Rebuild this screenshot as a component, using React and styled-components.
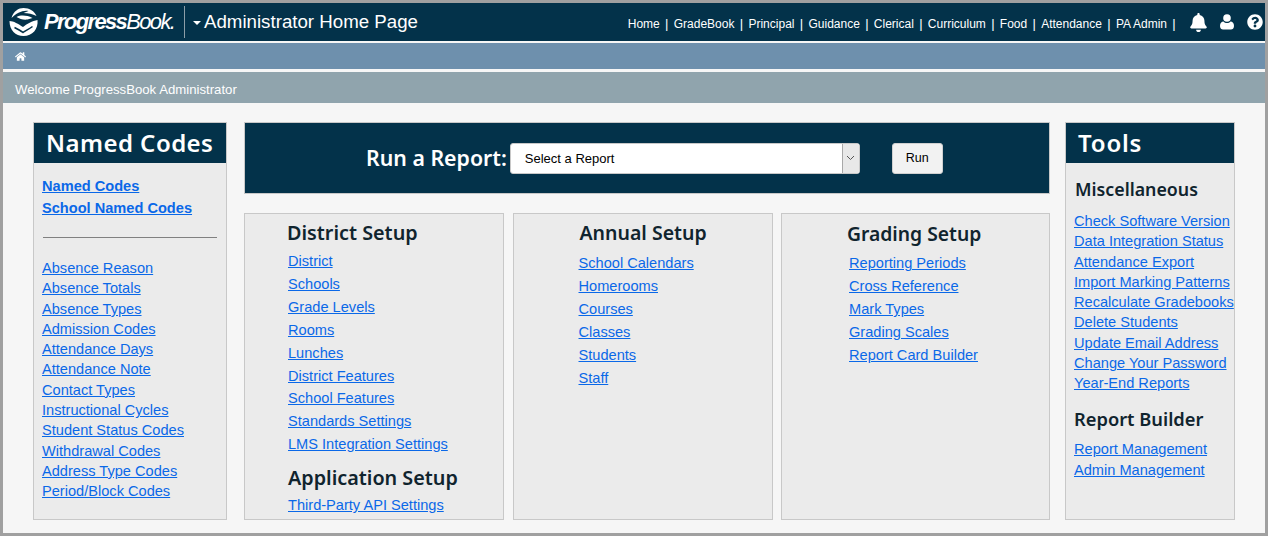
import React from "react";
import styled, { createGlobalStyle } from "styled-components";
import { FaBell, FaQuestionCircle, FaHome } from "react-icons/fa";

const GlobalStyle = createGlobalStyle`
  html, body {
    margin: 0;
    padding: 0;
    background: #f6f6f6;
  }
  body {
    font-family: "Liberation Sans", Arial, sans-serif;
  }
`;

const Frame = styled.div`
  box-sizing: border-box;
  width: 1268px;
  height: 536px;
  border: 3px solid #a0a0a0;
  background: #f6f6f6;
  overflow: hidden;
`;

const Header = styled.header`
  display: flex;
  align-items: center;
  height: 38px;
  background: #03324a;
  color: #fff;
`;

const Logo = styled.div`
  display: flex;
  flex: 0 0 auto;
  align-items: center;
  width: 182px;
  height: 32px;
  padding-left: 5px;
  box-sizing: border-box;
  border-right: 1px solid #8c9ea8;
  svg {
    flex: 0 0 auto;
  }
`;

const LogoText = styled.span`
  margin: -1px 0 0 5px;
  font-size: 22px;
  font-style: italic;
  letter-spacing: -1.65px;
  color: #fff;
  white-space: nowrap;
  b {
    font-weight: 700;
  }
`;

const PageTitle = styled.div`
  display: flex;
  align-items: center;
  margin-left: 8px;
  font-size: 18.7px;
  white-space: nowrap;
`;

const Caret = styled.span`
  width: 0;
  height: 0;
  margin-right: 3px;
  margin-top: 2px;
  border-left: 4px solid transparent;
  border-right: 4px solid transparent;
  border-top: 4px solid #fff;
`;

const TopNav = styled.nav`
  display: flex;
  align-items: center;
  margin-left: auto;
  padding-right: 2px;
  font-size: 12px;
`;

const NavLink = styled.a`
  margin-top: 2px;
  color: #fff;
  text-decoration: none;
  white-space: nowrap;
  &::after {
    content: "|";
    margin: 0 5.3px;
    font-size: 13px;
  }
`;

const IconRow = styled.div`
  display: flex;
  align-items: center;
  gap: 11.5px;
  margin-left: 8px;
  font-size: 16px;
  svg {
    display: block;
  }
`;

const BellIcon = styled(FaBell)`
  font-size: 19px;
`;

const CrumbBar = styled.div`
  display: flex;
  align-items: center;
  height: 26px;
  margin-top: 2px;
  padding-left: 12px;
  background: #6e90ad;
  color: #fff;
  font-size: 11px;
`;

const WelcomeBar = styled.div`
  display: flex;
  align-items: center;
  box-sizing: border-box;
  height: 31px;
  margin-top: 3px;
  padding: 4px 0 0 12px;
  background: #90a4ad;
  color: #fff;
  font-size: 13.2px;
`;

const Content = styled.main`
  display: flex;
  padding: 19px 30px 0;
  align-items: stretch;
  height: 398px;
`;

const SideBox = styled.aside`
  box-sizing: border-box;
  flex: 0 0 ${(p) => p.$width}px;
  height: 398px;
  background: #ebebeb;
  border: 1px solid #c8c8c8;
`;

const SideTitle = styled.h2`
  box-sizing: border-box;
  height: 40px;
  margin: 0;
  padding-left: 12px;
  background: #03324a;
  color: #fff;
  font-family: "Noto Sans", sans-serif;
  font-size: 24px;
  font-weight: 600;
  line-height: 40px;
  letter-spacing: ${(p) => p.$spacing}px;
`;

const Center = styled.div`
  flex: 0 0 806px;
  display: flex;
  flex-direction: column;
  gap: 19px;
  margin: 0 15px 0 17px;
`;

const Banner = styled.div`
  box-sizing: border-box;
  display: flex;
  align-items: center;
  height: 72px;
  padding-left: 121px;
  background: #03324a;
  border: 1px solid #c8c8c8;
`;

const BannerLabel = styled.label`
  margin-top: -2px;
  color: #fff;
  font-family: "Noto Sans", sans-serif;
  font-size: 21.3px;
  font-weight: 600;
  white-space: nowrap;
`;

const SelectBox = styled.div`
  box-sizing: border-box;
  display: flex;
  align-items: center;
  justify-content: space-between;
  width: 350px;
  height: 31px;
  margin-left: 3px;
  padding-left: 14px;
  background: #fff;
  border: 1px solid #c8c8c8;
  border-radius: 3px;
  font-size: 13px;
  color: #000;
`;

const SelectArrow = styled.span`
  box-sizing: border-box;
  display: flex;
  align-items: center;
  justify-content: center;
  width: 17px;
  height: 29px;
  background: #e8e8e8;
  border-left: 1px solid #a8a8a8;
`;

const RunButton = styled.button`
  box-sizing: border-box;
  width: 51px;
  height: 31px;
  margin-left: 32px;
  padding: 0;
  background: #f2f2f2;
  border: 1px solid #d0d0d0;
  border-radius: 3px;
  font-family: inherit;
  font-size: 12.5px;
  color: #000;
`;

const Panels = styled.div`
  display: grid;
  grid-template-columns: 260px 260px 269px;
  column-gap: 8.5px;
  height: 307px;
`;

const Panel = styled.section`
  box-sizing: border-box;
  padding: ${(p) => p.$top}px 0 0 ${(p) => p.$indent}px;
  background: #ebebeb;
  border: 1px solid #c8c8c8;
`;

const Heading = styled.h3`
  margin: ${(p) => p.$gap || 0}px 0 0 ${(p) => p.$shift || 0}px;
  color: #10242e;
  font-family: "Noto Sans", sans-serif;
  font-size: ${(p) => p.$size || 19.8}px;
  font-weight: 600;
  line-height: 24px;
  white-space: nowrap;
`;

const LinkList = styled.ul`
  list-style: none;
  margin: ${(p) => p.$top || 0}px 0 0;
  padding: 0 0 0 ${(p) => p.$indent || 0}px;
  font-size: 14.6px;
  line-height: ${(p) => p.$row}px;
`;

const TextLink = styled.a`
  color: #0a68e8;
  text-decoration: underline;
  white-space: nowrap;
  font-weight: ${(p) => (p.$strong ? 700 : 400)};
`;

const Rule = styled.hr`
  height: 1px;
  margin: 18px 9px 20px 9px;
  border: 0;
  background: #808080;
`;

const navItems = ["Home", "GradeBook", "Principal", "Guidance", "Clerical", "Curriculum", "Food", "Attendance", "PA Admin"];
const codes = ["Absence Reason", "Absence Totals", "Absence Types", "Admission Codes", "Attendance Days", "Attendance Note", "Contact Types", "Instructional Cycles", "Student Status Codes", "Withdrawal Codes", "Address Type Codes", "Period/Block Codes"];
const district = ["District", "Schools", "Grade Levels", "Rooms", "Lunches", "District Features", "School Features", "Standards Settings", "LMS Integration Settings"];
const annual = ["School Calendars", "Homerooms", "Courses", "Classes", "Students", "Staff"];
const grading = ["Reporting Periods", "Cross Reference", "Mark Types", "Grading Scales", "Report Card Builder"];
const misc = ["Check Software Version", "Data Integration Status", "Attendance Export", "Import Marking Patterns", "Recalculate Gradebooks", "Delete Students", "Update Email Address", "Change Your Password", "Year-End Reports"];
const builder = ["Report Management", "Admin Management"];

function Links({ items, row, top, indent }) {
  return (
    <LinkList $row={row} $top={top} $indent={indent}>
      {items.map((item) => (
        <li key={item}>
          <TextLink href="#">{item}</TextLink>
        </li>
      ))}
    </LinkList>
  );
}

function LogoMark() {
  return (
    <svg width="31" height="30" viewBox="0 0 30 30" fill="#fff">
      <path d="M3 11C5 4 10 1 15 1 21 1 26 4 28 9 24 7 20 6 15 6L20 4C14 3 8 6 3 11Z" />
      <path d="M8 10C12 8 18 8 24 11L19 12.500C15 13 11 12 8 10Z" />
      <path d="M1 14C5 14 10 17 14.500 20 18 17 24 14 29 13 30 22 24 29 15 29 7 29 1 23 1 14Z" />
      <path d="M6 20.500C9 22 12 23.500 14.500 25.500 17 23.500 21 22 24 19.500" fill="none" stroke="#03324a" strokeWidth="1.5" />
    </svg>
  );
}

function UserIcon() {
  return (
    <svg width="16" height="16" viewBox="1.500 0 16 16" fill="#fff">
      <circle cx="8.500" cy="4" r="3.800" />
      <path d="M1.500 12C1.500 9 3 7.500 5 7.500 6 8.500 7 9 8.500 9 10 9 11 8.500 12 7.500 14 7.500 15.500 9 15.500 12 15.500 14.500 14 15.500 12.500 15.500L4.500 15.500C3 15.500 1.500 14.500 1.500 12Z" />
    </svg>
  );
}

export default function App() {
  return (
    <Frame>
      <GlobalStyle />
      <Header>
        <Logo>
          <LogoMark />
          <LogoText>
            <b>Progress</b>Book.
          </LogoText>
        </Logo>
        <PageTitle>
          <Caret />
          Administrator Home Page
        </PageTitle>
        <TopNav>
          {navItems.map((item) => (
            <NavLink href="#" key={item}>
              {item}
            </NavLink>
          ))}
          <IconRow>
            <BellIcon />
            <UserIcon />
            <FaQuestionCircle />
          </IconRow>
        </TopNav>
      </Header>
      <CrumbBar>
        <FaHome />
      </CrumbBar>
      <WelcomeBar>Welcome ProgressBook Administrator</WelcomeBar>
      <Content>
        <SideBox $width={194}>
          <SideTitle $spacing={0.45}>Named Codes</SideTitle>
          <LinkList $row={22} $top={12} $indent={8}>
            <li>
              <TextLink href="#" $strong>Named Codes</TextLink>
            </li>
            <li>
              <TextLink href="#" $strong>School Named Codes</TextLink>
            </li>
          </LinkList>
          <Rule />
          <Links items={codes} row={20.3} indent={8} />
        </SideBox>
        <Center>
          <Banner>
            <BannerLabel>Run a Report:</BannerLabel>
            <SelectBox>
              Select a Report
              <SelectArrow>
                <svg width="9" height="6" viewBox="0 0 9 6" fill="none" stroke="#555">
                  <path d="M1 1l3.500 3.500L8 1" />
                </svg>
              </SelectArrow>
            </SelectBox>
            <RunButton>Run</RunButton>
          </Banner>
          <Panels>
            <Panel $top={7} $indent={42}>
              <Heading>District Setup</Heading>
              <Links items={district} row={22.9} top={5} indent={1} />
              <Heading $gap={10} $shift={1}>Application Setup</Heading>
              <Links items={["Third-Party API Settings"]} row={23} top={4} indent={1} />
            </Panel>
            <Panel $top={7} $indent={65}>
              <Heading $size={19.5} $shift={1}>Annual Setup</Heading>
              <Links items={annual} row={23} top={7} />
            </Panel>
            <Panel $top={8} $indent={65}>
              <Heading $size={19.3}>Grading Setup</Heading>
              <Links items={grading} row={23} top={6} indent={2} />
            </Panel>
          </Panels>
        </Center>
        <SideBox $width={169.5}>
          <SideTitle $spacing={0.8}>Tools</SideTitle>
          <Heading $size={17.8} $gap={14} $shift={9}>Miscellaneous</Heading>
          <Links items={misc} row={20.3} top={10} indent={8} />
          <Heading $size={18.3} $gap={13} $shift={8}>Report Builder</Heading>
          <Links items={builder} row={21} top={8} indent={8} />
        </SideBox>
      </Content>
    </Frame>
  );
}
